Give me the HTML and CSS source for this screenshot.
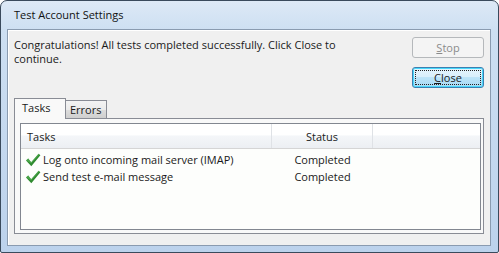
FILE: index.html
```html
<!DOCTYPE html>
<html>
<head>
<meta charset="utf-8">
<link rel="stylesheet" href="styles.css">
</head>
<body>
<div class="window">
  <div class="titlebar">Test Account Settings</div>
  <div class="client">
    <div class="top">
      <p class="msg">Congratulations! All tests completed successfully. Click Close to<br>continue.</p>
      <div class="buttons">
        <button class="btn disabled" type="button"><u>S</u>top</button>
        <button class="btn default" type="button"><span class="focus"><u>C</u>lose</span></button>
      </div>
    </div>
    <div class="tabs">
      <div class="tabstrip">
        <div class="tab active">Tasks</div>
        <div class="tab">Errors</div>
      </div>
      <div class="panel">
        <div class="list">
          <div class="row head">
            <div class="c1">Tasks</div>
            <div class="c2">Status</div>
            <div class="c3"></div>
          </div>
          <div class="row item">
            <div class="c1"><svg class="check" viewBox="0 0 16 14" width="16" height="14"><path d="M1 7.5 L3.2 5.6 L6.2 9.2 L13.6 0.8 L15.4 2.2 L6.3 13.2 Z" fill="#2f8a2f"/><path d="M1 7.5 L3.2 5.6 L6.2 9.2 L13.6 0.8 L14.4 1.4 L6.2 10.6 Z" fill="#5cb85c" opacity="0.6"/></svg>Log onto incoming mail server (IMAP)</div>
            <div class="c2">Completed</div>
            <div class="c3"></div>
          </div>
          <div class="row item">
            <div class="c1"><svg class="check" viewBox="0 0 16 14" width="16" height="14"><path d="M1 7.5 L3.2 5.6 L6.2 9.2 L13.6 0.8 L15.4 2.2 L6.3 13.2 Z" fill="#2f8a2f"/><path d="M1 7.5 L3.2 5.6 L6.2 9.2 L13.6 0.8 L14.4 1.4 L6.2 10.6 Z" fill="#5cb85c" opacity="0.6"/></svg>Send test e-mail message</div>
            <div class="c2">Completed</div>
            <div class="c3"></div>
          </div>
        </div>
      </div>
    </div>
  </div>
</div>
</body>
</html>
```

FILE: styles.css
```css
* { box-sizing: border-box; }
html, body { margin: 0; padding: 0; background: #ffffff; }
body {
  font-family: "Open Sans", "Noto Sans", sans-serif;
  font-size: 11px;
  color: #1a1a1a;
}
.window {
  width: 499px;
  height: 253px;
  border: 1px solid #3a4a5c;
  border-radius: 7px 7px 2px 2px;
  background: linear-gradient(to bottom, #dde9f6 0px, #cddff2 30px, #bcd2ec 100%);
  padding: 0 7px 6px 6px;
  display: flex;
  flex-direction: column;
}
.titlebar {
  height: 28px;
  line-height: 28px;
  padding-left: 7px;
  font-size: 11px;
  color: #111;
}
.client {
  flex: 1;
  background: #f0f0f0;
  border: 1px solid #8a9bb0;
  box-shadow: inset 1px 1px 0 #ffffff;
  display: flex;
  flex-direction: column;
}
.top {
  display: flex;
  justify-content: space-between;
  padding: 7px 6px 0 6px;
}
.msg {
  margin: 1px 0 0 0;
  line-height: 14px;
}
.buttons {
  display: flex;
  flex-direction: column;
  gap: 9px;
}
.btn {
  width: 72px;
  height: 21px;
  font: inherit;
  padding: 0;
  border-radius: 3px;
  display: flex;
  align-items: center;
  justify-content: center;
}
.btn.disabled {
  border: 1px solid #b5b8bb;
  background: #f4f4f4;
  color: #8b8b8b;
}
.btn.default {
  border: 1px solid #3c7fb1;
  background: linear-gradient(to bottom, #e5f4fc 0%, #d9effb 45%, #bde4f8 50%, #a7d9f5 100%);
  color: #1a1a1a;
  box-shadow: inset 0 0 0 1px #48d8fb;
  padding: 2px;
}
.focus {
  display: flex;
  align-items: center;
  justify-content: center;
  width: 100%;
  height: 100%;
  border: 1px dotted #222;
}
.tabs {
  padding: 10px 6px 0 6px;
}
.tabstrip {
  display: flex;
  align-items: flex-end;
  height: 21px;
  position: relative;
  z-index: 1;
}
.tab {
  border: 1px solid #898c95;
  border-bottom: none;
  background: linear-gradient(to bottom, #f3f3f3 0%, #ebebeb 50%, #dddddd 51%, #cfcfcf 100%);
  height: 18px;
  padding: 1px 5px 0 4px;
  margin-bottom: 1px;
}
.tab.active {
  background: #f9f9f9;
  height: 21px;
  width: 52px;
  padding: 1px 0 0 7px;
  margin-bottom: 0;
  margin-right: -1px;
  position: relative;
  z-index: 2;
}
.tab + .tab { border-left: none; padding-left: 5px; }
.panel {
  border: 1px solid #898c95;
  background: #f9f9f9;
  height: 116px;
  margin-top: -1px;
  padding: 4px 2px 3px 5px;
}
.list {
  height: 100%;
  border: 1px solid #828790;
  background: #fdfefc;
}
.row {
  display: flex;
}
.head {
  height: 25px;
  align-items: center;
  background: linear-gradient(to bottom, #ffffff 0%, #ffffff 45%, #f4f6f9 50%, #eceff3 100%);
  border-bottom: 1px solid #d5d5d5;
  margin-bottom: 2px;
}
.head .c1, .head .c2 {
  height: 100%;
  display: flex;
  align-items: center;
  border-right: 1px solid #dfe2e6;
}
.head .c1 { padding-left: 6px; }
.head .c2 { justify-content: center; }
.c1 { width: 251px; }
.c2 { width: 101px; text-align: center; }
.c3 { flex: 1; }
.item {
  height: 17px;
  align-items: center;
}
.item .c1 {
  display: flex;
  align-items: center;
  padding-left: 4px;
  gap: 2px;
}
.check { flex: none; }
```
